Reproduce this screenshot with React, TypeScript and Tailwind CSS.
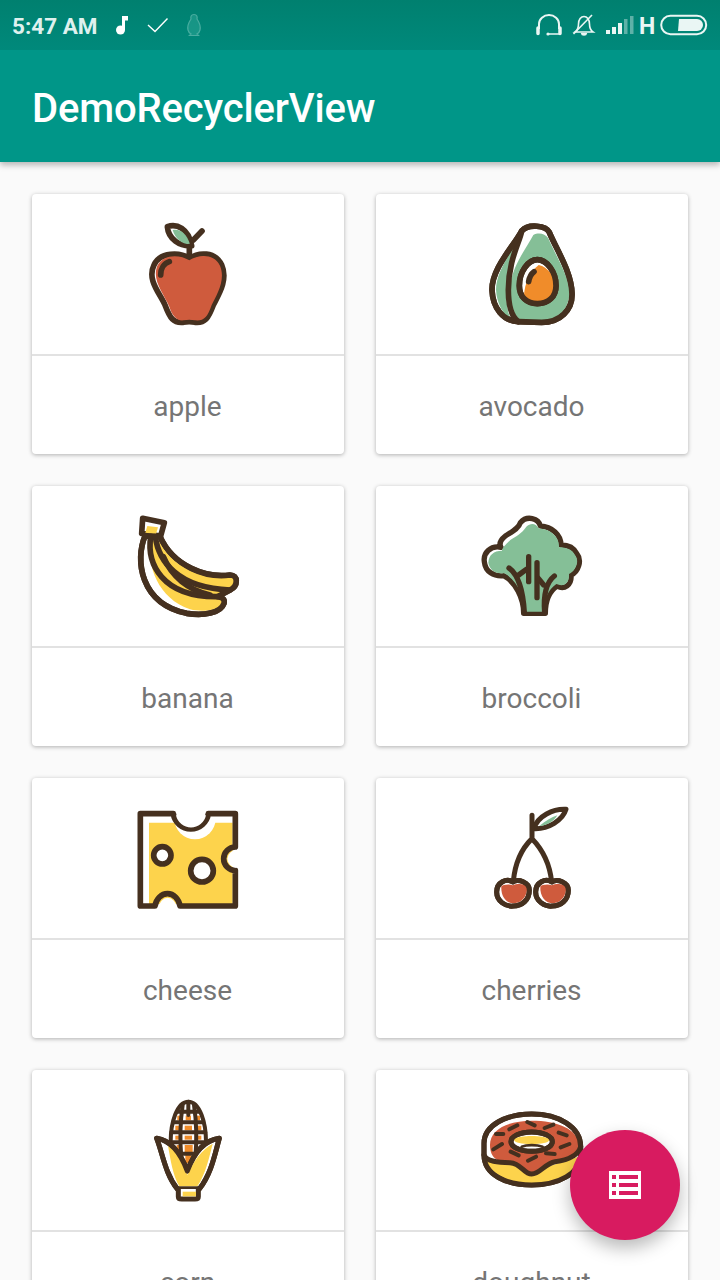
import React from "react"

const ink = "#45301f"
const red = "#cf5b3d"
const green = "#85bf97"
const yellow = "#fdd34c"
const orange = "#f08c2a"

const Apple = () => (
  <g fill="none" stroke={ink} strokeWidth="17" strokeLinecap="round" strokeLinejoin="round">
    <path d="M112,35 C140,25 175,40 185,92 C150,95 115,72 112,35Z" fill="#fff" />
    <path d="M128,45 C150,40 170,55 180,88 C155,88 135,70 128,45Z" fill={green} stroke="none" />
    <path d="M178,95 V125 M190,75 L216,48" />
    <path d="M178,130 C205,112 255,108 275,150 C295,195 265,240 250,270 C235,310 225,325 195,322 C185,320 170,320 160,322 C130,325 120,310 105,270 C90,235 50,195 72,150 C90,110 150,112 178,130Z" fill="#fff" />
    <path d="M178,136 C205,118 252,114 270,152 C288,195 260,240 245,270 C232,308 222,318 195,316 C185,314 170,314 160,316 C140,318 125,300 118,275 C100,235 65,195 82,152 C100,116 150,118 178,136Z" fill={red} stroke="none" />
    <path d="M92,180 C92,160 102,145 118,140" />
  </g>
)

const Avocado = () => (
  <g fill="none" stroke={ink} strokeWidth="17" strokeLinecap="round" strokeLinejoin="round">
    <path d="M125,48 C100,95 35,160 36,225 C38,280 70,318 115,320 L185,322 C240,322 278,285 276,235 C274,170 230,105 208,52 C198,32 145,25 125,48Z" fill="#fff" />
    <path d="M122,60 C100,105 48,165 48,225 C50,265 70,300 92,310 C70,270 75,150 122,60Z" fill={green} stroke="none" />
    <path d="M160,60 C175,52 195,55 205,70 C225,120 268,180 268,235 C268,280 235,316 185,316 L120,314 C95,295 85,250 92,205 C100,150 135,105 160,60Z" fill={green} stroke="none" />
    <path d="M125,48 C120,80 85,135 85,225 C85,270 95,305 115,320" />
    <path d="M125,48 C100,95 35,160 36,225 C38,280 70,318 115,320 L185,322 C240,322 278,285 276,235 C274,170 230,105 208,52 C198,32 145,25 125,48Z" />
    <path d="M172,134 C200,134 228,170 228,212 C228,245 205,266 172,266 C140,266 118,245 118,212 C118,170 145,134 172,134Z" fill="#fff" />
    <path d="M176,150 C204,155 224,185 224,212 C224,242 202,260 172,260 C155,260 140,254 132,240 C134,205 150,170 176,150Z" fill={orange} stroke="none" />
    <path d="M172,134 C200,134 228,170 228,212 C228,245 205,266 172,266 C140,266 118,245 118,212 C118,170 145,134 172,134Z" />
    <path d="M146,200 C148,186 154,176 162,170" />
  </g>
)

const Banana = () => (
  <g fill="none" stroke={ink} strokeWidth="17" strokeLinecap="round" strokeLinejoin="round">
    <path d="M38,25 L103,38 L92,78 L35,70Z" fill="#fff" />
    <path d="M52,48 L84,52 L78,72 L46,68Z" fill={yellow} stroke="none" />
    <path d="M45,78 C15,150 30,280 170,310 C220,318 272,310 282,280 C285,268 278,262 262,260 L300,240 C325,228 325,195 300,195 C230,205 130,170 90,80Z" fill="#fff" />
    <path d="M62,90 C50,170 85,265 180,298 C220,308 265,300 276,282 C278,270 270,262 250,258 C275,252 300,240 312,222 C315,205 310,200 298,202 C225,212 130,175 88,95Z" fill={yellow} stroke="none" />
    <path d="M62,80 C50,160 95,262 262,260" />
    <path d="M76,80 C85,150 140,235 300,240" />
    <path d="M100,140 C125,200 175,240 240,255" />
    <path d="M45,78 C15,150 30,280 170,310 C220,318 272,310 282,280 C285,268 278,262 262,260 L300,240 C325,228 325,195 300,195 C230,205 130,170 90,80" />
  </g>
)

const Broccoli = () => (
  <g fill="none" stroke={ink} strokeWidth="16" strokeLinecap="round" strokeLinejoin="round">
    <path d="M140,310 L205,310 C205,275 215,245 240,228 C262,240 285,225 282,195 C305,185 315,150 300,132 C290,112 270,105 252,105 C252,75 225,50 190,48 C185,25 150,15 130,38 C125,55 105,65 85,78 C70,90 65,100 72,112 C40,105 18,130 22,155 C25,185 50,200 80,197 C115,215 140,265 140,310Z" fill="#fff" />
    <path d="M145,305 L200,305 C200,272 212,240 238,222 C260,232 278,220 276,192 C298,182 308,152 294,135 C285,118 268,112 246,112 C248,82 222,58 185,55 C175,38 160,40 148,50 C135,70 115,80 100,90 C85,105 75,115 75,122 C50,122 35,135 34,158 C38,180 55,192 82,190 C120,210 145,265 145,305Z" fill={green} stroke="none" />
    <path d="M96,174 C125,195 138,240 142,308" />
    <path d="M125,195 L148,178" />
    <path d="M155,140 V215" />
    <path d="M180,158 V263" />
    <path d="M232,198 C210,215 198,245 203,308" />
    <path d="M200,225 L184,205" />
  </g>
)

const Cheese = () => (
  <g fill="none" stroke={ink} strokeWidth="17" strokeLinecap="round" strokeLinejoin="round">
    <path d="M57,62 H308 V306 H57Z" fill={yellow} stroke="none" />
    <circle cx="195" cy="50" r="62" fill="#fff" stroke="none" />
    <path d="M31,35 H130 A53,53 0 0 0 235,35 H316 V135 A35,35 0 0 0 316,205 V312 H150 A38,44 0 0 0 75,312 H31Z" />
    <path d="M138,40 A46,46 0 0 0 228,40Z M292,170 A26,28 0 0 1 320,145 V197 A26,28 0 0 1 292,170Z M84,320 A30,44 0 0 1 142,320Z" fill="#fff" stroke="none" />
    <circle cx="97" cy="160" r="26" fill="#fff" />
    <circle cx="216" cy="206" r="34" fill="#fff" />
  </g>
)

const Cherries = () => (
  <g fill="none" stroke={ink} strokeWidth="15" strokeLinecap="round" strokeLinejoin="round">
    <path d="M162,80 C172,42 220,20 258,22 C248,55 205,82 162,80Z" fill="#fff" />
    <path d="M178,72 C195,58 215,45 232,40 C222,58 200,72 178,72Z" fill={green} stroke="none" />
    <path d="M156,40 V110 M156,110 C125,140 105,185 100,238 M156,110 C190,145 210,190 215,240" />
    <path d="M98,240 C80,228 50,240 50,270 C50,298 78,315 100,312 C125,312 148,295 148,265 C148,240 115,230 98,240Z" fill="#fff" />
    <path d="M98,250 C85,244 68,250 64,252 C62,285 80,304 102,304 C125,302 142,285 142,252 C130,244 110,244 98,250Z" fill={red} stroke="none" />
    <path d="M98,240 C80,228 50,240 50,270 C50,298 78,315 100,312 C125,312 148,295 148,265 C148,240 115,230 98,240Z" />
    <path d="M215,240 C197,228 167,240 167,270 C167,298 195,315 217,312 C242,312 265,295 265,265 C265,240 232,230 215,240Z" fill="#fff" />
    <path d="M215,250 C202,244 185,250 181,252 C179,285 197,304 219,304 C242,302 259,285 259,252 C247,244 227,244 215,250Z" fill={red} stroke="none" />
    <path d="M215,240 C197,228 167,240 167,270 C167,298 195,315 217,312 C242,312 265,295 265,265 C265,240 232,230 215,240Z" />
  </g>
)

const Corn = () => (
  <g fill="none" stroke={ink} strokeLinecap="round" strokeLinejoin="round">
    <path d="M145,20 C180,20 198,85 198,140 L190,210 H100 L92,140 C92,85 110,20 145,20Z" fill="#fff" />
    <g fill={orange} stroke="none">
      <rect x="112" y="62" width="14" height="14" />
      <rect x="137" y="62" width="16" height="14" />
      <rect x="166" y="62" width="14" height="14" />
      <rect x="106" y="92" width="16" height="14" />
      <rect x="134" y="92" width="22" height="14" />
      <rect x="168" y="92" width="16" height="14" />
      <rect x="106" y="122" width="16" height="12" />
      <rect x="134" y="122" width="22" height="12" />
      <rect x="168" y="122" width="16" height="12" />
      <rect x="110" y="150" width="12" height="20" />
      <rect x="134" y="150" width="24" height="30" />
      <rect x="136" y="180" width="18" height="24" />
    </g>
    <g strokeWidth="12">
      <path d="M145,20 C180,20 198,85 198,140 M145,20 C110,20 92,85 92,140" />
      <path d="M128,30 C122,70 118,120 124,190 M162,30 C168,70 172,120 166,190 M145,20 V60" />
      <path d="M114,50 H176 M100,82 H190 M94,112 H196 M94,142 H196 M120,176 H170" />
    </g>
    <path d="M50,130 C85,135 118,165 142,228 C165,165 200,135 238,130 C225,175 215,235 178,282 L112,282 C75,235 68,175 50,130Z" fill="#fff" strokeWidth="15" />
    <path d="M84,152 C105,165 128,195 142,240 C162,195 185,165 218,146 C208,185 198,235 172,274 L118,274 C98,240 92,195 84,152Z" fill={yellow} stroke="none" />
    <path d="M50,130 C85,135 118,165 142,228 C165,165 200,135 238,130 C225,175 215,235 178,282 L112,282 C75,235 68,175 50,130Z" strokeWidth="15" />
    <path d="M115,282 V305 Q115,312 125,312 H165 Q175,312 175,305 V282" fill="#fff" strokeWidth="15" />
    <path d="M128,290 H168 V304 H128Z" fill={yellow} stroke="none" />
  </g>
)

const Doughnut = () => (
  <g fill="none" stroke={ink} strokeWidth="15" strokeLinecap="round" strokeLinejoin="round">
    <path d="M42,130 C42,75 110,42 185,42 C265,42 332,80 332,140 V165 C332,220 265,255 185,255 C110,255 42,225 42,165Z" fill="#fff" />
    <path d="M46,180 C80,185 130,180 165,215 C190,225 215,200 250,195 L325,170 C320,220 260,250 185,250 C115,250 60,220 46,180Z" fill={yellow} stroke="none" />
    <path d="M60,135 C60,85 120,62 185,62 C260,62 326,85 328,140 C325,165 295,180 255,185 C225,190 210,222 185,222 C160,222 155,190 120,188 C85,188 60,175 60,135Z" fill={red} stroke="none" />
    <path d="M42,165 C50,185 85,188 120,188 C155,190 160,222 185,222 C210,222 225,190 255,185 C295,180 325,165 332,140" />
    <path d="M42,130 C42,75 110,42 185,42 C265,42 332,80 332,140 V165 C332,220 265,255 185,255 C110,255 42,225 42,165Z" />
    <ellipse cx="185" cy="125" rx="62" ry="29" fill="#fff" />
    <path d="M130,118 C150,105 220,105 240,118 C235,130 215,132 185,132 C155,132 135,130 130,118Z" fill={yellow} stroke="none" />
    <ellipse cx="185" cy="125" rx="62" ry="29" />
    <path d="M155,140 C170,134 200,134 218,140" strokeWidth="8" />
    <path d="M78,102 H100 M118,88 L142,76 M172,66 L194,76 M224,84 L250,74 M266,98 L290,106 M272,142 L298,132 M228,160 L254,162 M174,182 L198,170 M122,155 L146,166 M70,148 L96,132" strokeWidth="12" />
  </g>
)

const StatusLeft = () => (
  <div className="flex items-center">
    <span className="ml-[12px] w-[86px] pt-[3px] text-[22.5px] leading-none font-bold text-[#dff1ee] whitespace-nowrap">
      5:47 AM
    </span>
    <svg className="ml-[17px]" width="14" height="22" viewBox="0 0 14 22" fill="#fff">
      <circle cx="5.5" cy="16" r="4.5" />
      <rect x="7" y="2" width="3" height="14" />
      <path d="M7,2 H13 V6.5 H7Z" />
    </svg>
    <svg className="ml-[18px]" width="22" height="18" viewBox="0 0 22 18" fill="none" stroke="#fff" strokeWidth="1.4">
      <path d="M1,9 L8,15.5 L20.5,2.5" />
    </svg>
    <svg className="ml-[17px] opacity-50" width="16" height="24" viewBox="0 0 16 24" fill="#2fa797" stroke="#8fd5cb" strokeWidth="1.2">
      <path d="M8,1.5 C11,1.5 11.5,4 11,6 C13,9 15,13 14,17 C13.5,19 12,20.5 11,21 L12.5,22.5 H3.5 L5,21 C4,20.5 2.5,19 2,17 C1,13 3,9 5,6 C4.5,4 5,1.5 8,1.5Z" />
    </svg>
  </div>
)

const StatusRight = () => (
  <div className="flex items-center pr-[12px]">
    <svg width="26" height="22" viewBox="0 0 26 22" fill="none" stroke="#eaf6f4" strokeWidth="2">
      <path d="M3,15 V10 A10,9 0 0 1 23,10 V15" />
      <path d="M2,14 V19.5 M24,14 V19.5" strokeWidth="3.5" strokeLinecap="round" />
      <path d="M12,20 H24" strokeWidth="1.5" />
      <circle cx="12" cy="20" r="1.6" fill="#eaf6f4" stroke="none" />
    </svg>
    <svg className="ml-[10px]" width="24" height="22" viewBox="0 0 24 22" fill="none" stroke="#eaf6f4" strokeWidth="1.6">
      <path d="M3,18 C6,16 6.5,13 6.5,10 C6.5,5.5 9,2.5 12,2.5 C15,2.5 17.5,5.5 17.5,10 C17.5,13 18,16 21,18Z" />
      <path d="M9.5,19 C10,21.5 14,21.5 14.5,19" fill="#eaf6f4" />
      <path d="M1.5,20 L20,1" />
    </svg>
    <svg className="ml-[9px]" width="29" height="20" viewBox="0 0 29 20" fill="#eaf6f4">
      <rect x="1" y="15" width="4" height="4" />
      <rect x="7" y="12" width="4" height="7" />
      <rect x="13" y="8" width="4" height="11" />
      <rect x="19" y="4" width="3.5" height="15" opacity="0.4" />
      <rect x="25" y="1" width="3.5" height="18" opacity="0.4" />
    </svg>
    <span className="ml-[5px] w-[16px] pt-[2px] text-[23px] leading-none font-bold text-[#eaf6f4]">H</span>
    <svg className="ml-[5px]" width="48" height="22" viewBox="0 0 48 22" fill="none">
      <rect x="1.2" y="1.8" width="45" height="18.4" rx="9.2" stroke="#eaf6f4" strokeWidth="2" />
      <path d="M19,5 H37 A6,6 0 0 1 43,11 A6,6 0 0 1 37,17 H18 Z" fill="#eaf6f4" />
    </svg>
  </div>
)

const items = [
  { name: "apple", view: "-6 -3 360 360", Icon: Apple },
  { name: "avocado", view: "-24 -3 360 360", Icon: Avocado },
  { name: "banana", view: "-6 -12 360 360", Icon: Banana },
  { name: "broccoli", view: "-15 -12 360 360", Icon: Broccoli },
  { name: "cheese", view: "-6 -12 360 360", Icon: Cheese },
  { name: "cherries", view: "-24 -12 360 360", Icon: Cherries },
  { name: "corn", view: "-36 -15 360 360", Icon: Corn },
  { name: "doughnut", view: "6 -30 360 360", Icon: Doughnut },
]

const App = () => {
  return (
    <div className="relative h-[1280px] w-[720px] overflow-hidden bg-[#fafafa] font-['Roboto',sans-serif]">
      <div className="relative z-10 shadow-[0_3px_6px_rgba(0,0,0,0.28)]">
        <div className="flex h-[50px] items-center justify-between bg-gradient-to-b from-[#00806f] to-[#00897b]">
          <StatusLeft />
          <StatusRight />
        </div>
        <div className="flex h-[112px] items-center bg-[#009688] pl-[32px] pt-[5px]">
          <span className="text-[40px] font-medium tracking-[-0.15px] text-white">DemoRecyclerView</span>
        </div>
      </div>

      <div className="grid grid-cols-[312px_312px] gap-8 px-8 pt-8">
        {items.map(({ name, view, Icon }) => (
          <div
            key={name}
            className="h-[260px] rounded-[4px] bg-white shadow-[0_1px_4px_rgba(0,0,0,0.3)]"
          >
            <div className="flex h-[162px] items-center justify-center border-b-2 border-[#e2e2e2]">
              <svg width="120" height="120" viewBox={view}>
                <Icon />
              </svg>
            </div>
            <div className="flex h-[98px] items-center justify-center pt-[4px] pr-[1px] text-[28px] text-[#757575]">
              {name}
            </div>
          </div>
        ))}
      </div>

      <div className="absolute left-[570px] top-[1130px] flex h-[110px] w-[110px] items-center justify-center rounded-full bg-[#d81b60] shadow-[0_8px_18px_rgba(0,0,0,0.28)]">
        <svg width="32" height="28" viewBox="0 0 32 28" fill="#fff">
          <path
            fillRule="evenodd"
            d="M0,0 H32 V28 H0Z M3,4 V8 H7 V4Z M10,4 V8 H29 V4Z M3,12 V16 H7 V12Z M10,12 V16 H29 V12Z M3,20 V24 H7 V20Z M10,20 V24 H29 V20Z"
          />
        </svg>
      </div>
    </div>
  )
}

export default App
